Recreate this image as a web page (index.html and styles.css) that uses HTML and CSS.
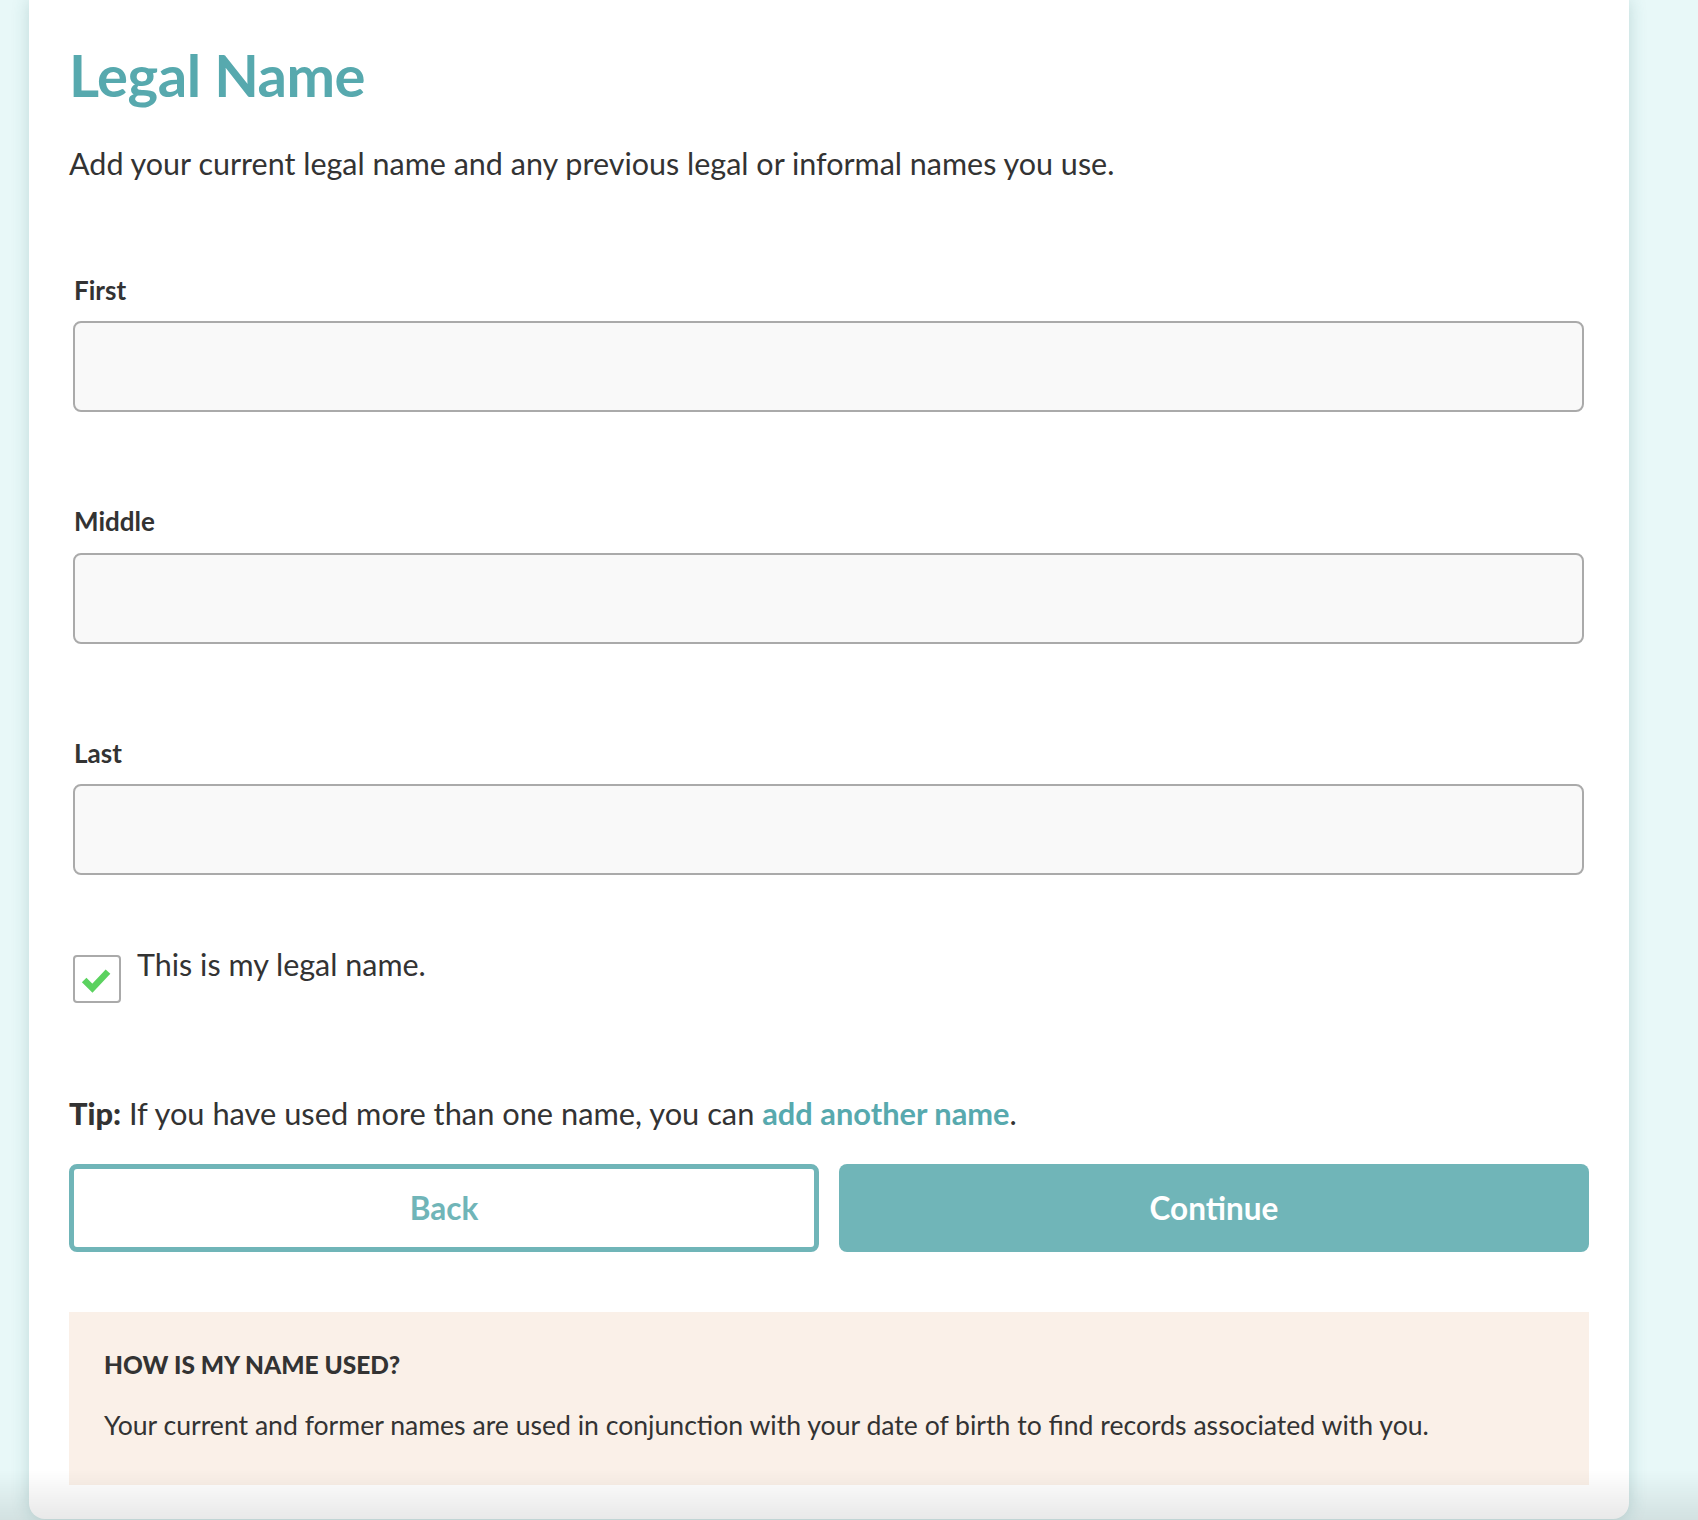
FILE: index.html
```html
<!DOCTYPE html>
<html lang="en">
<head>
<meta charset="utf-8">
<title>Legal Name</title>
<link rel="stylesheet" href="styles.css">
</head>
<body>
<main class="card">
  <h1 class="title">Legal Name</h1>
  <p class="intro">Add your current legal name and any previous legal or informal names you use.</p>

  <div class="field">
    <label class="field-label" for="first">First</label>
    <input class="field-input" id="first" type="text">
  </div>
  <div class="field">
    <label class="field-label" for="middle">Middle</label>
    <input class="field-input" id="middle" type="text">
  </div>
  <div class="field">
    <label class="field-label" for="last">Last</label>
    <input class="field-input" id="last" type="text">
  </div>

  <div class="check-row">
    <span class="checkbox">
      <svg viewBox="0 0 48 48" width="44" height="44" aria-hidden="true">
        <polyline points="10,25 19,34 36,16" fill="none" stroke="#5bd25f" stroke-width="7" stroke-linecap="butt" stroke-linejoin="miter"/>
      </svg>
    </span>
    <span class="check-text">This is my legal name.</span>
  </div>

  <p class="tip"><strong>Tip:</strong> If you have used more than one name, you can <a class="tip-link" href="#">add another name</a>.</p>

  <div class="actions">
    <button class="btn btn-back" type="button">Back</button>
    <button class="btn btn-continue" type="button">Continue</button>
  </div>

  <section class="info">
    <h2 class="info-title">HOW IS MY NAME USED?</h2>
    <p class="info-text">Your current and former names are used in conjunction with your date of birth to find records associated with you.</p>
  </section>
</main>
<div class="bottom-fade"></div>
</body>
</html>
```

FILE: styles.css
```css
* { box-sizing: border-box; }

html, body {
  margin: 0;
  padding: 0;
}

body {
  background: #e8f8f8;
  font-family: Lato, "Noto Sans", sans-serif;
  color: #333333;
  height: 1520px;
  overflow: hidden;
}

.card {
  margin-left: 29px;
  width: 1600px;
  background: #ffffff;
  padding: 40px 40px 34px;
  border-radius: 0 0 16px 16px;
  box-shadow: 0 0 18px rgba(40, 110, 110, 0.22);
}

.title {
  margin: 0;
  font-size: 58px;
  line-height: 1.2;
  font-weight: 700;
  color: #57a9ae;
  letter-spacing: -0.5px;
}

.intro {
  margin: 35px 0 0;
  font-size: 30.5px;
  line-height: 1.2;
}

.field {
  margin-top: 94px;
  padding: 0 5px 0 4px;
  display: flex;
  flex-direction: column;
}

.field-label {
  font-size: 26px;
  font-weight: 700;
  line-height: 1.2;
  padding-left: 1px;
}

.field-input {
  margin-top: 15px;
  height: 91px;
  border: 2px solid #aaaaaa;
  border-radius: 8px;
  background: #f9f9f9;
  font: inherit;
}

.check-row {
  margin-top: 71px;
  padding-left: 4px;
  display: flex;
  align-items: flex-start;
  gap: 16px;
}

.checkbox {
  margin-top: 9px;
  width: 48px;
  height: 48px;
  border: 2px solid #aaaaaa;
  border-radius: 4px;
  background: #ffffff;
  display: flex;
  align-items: center;
  justify-content: center;
  flex: none;
}

.checkbox svg {
  display: block;
}

.check-text {
  font-size: 30.5px;
  line-height: 1.2;
}

.tip {
  margin: 93px 0 0;
  font-size: 30.8px;
  line-height: 1.2;
}

.tip strong {
  font-weight: 900;
}

.tip-link {
  color: #57a9ae;
  font-weight: 700;
  text-decoration: none;
}

.actions {
  margin-top: 31px;
  display: grid;
  grid-template-columns: 1fr 1fr;
  gap: 20px;
}

.btn {
  height: 88px;
  border-radius: 8px;
  font-family: inherit;
  font-size: 31.5px;
  font-weight: 700;
}

.btn-back {
  background: #ffffff;
  border: 5px solid #70b5b8;
  color: #70b5b8;
}

.btn-continue {
  background: #70b5b8;
  border: none;
  color: #ffffff;
}

.info {
  margin-top: 60px;
  background: #faf0e8;
  padding: 38px 35px 43px;
}

.info-title {
  margin: 0;
  font-size: 24.5px;
  font-weight: 900;
  line-height: 1.2;
}

.info-text {
  margin: 31px 0 0;
  font-size: 26.6px;
  line-height: 1.2;
}

.bottom-fade {
  position: fixed;
  left: 0;
  right: 0;
  bottom: 0;
  height: 50px;
  background: linear-gradient(rgba(0, 0, 0, 0), rgba(0, 0, 0, 0.09));
  pointer-events: none;
}
```
